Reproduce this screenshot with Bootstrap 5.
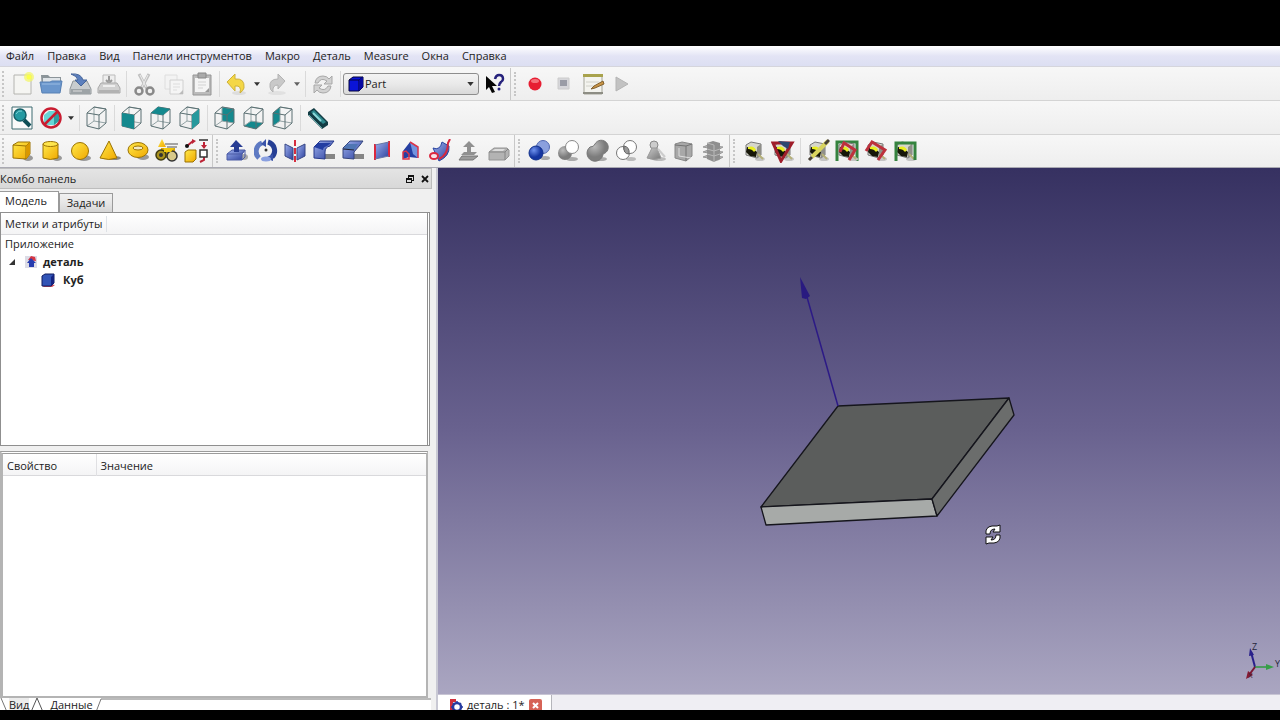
<!DOCTYPE html>
<html lang="ru">
<head>
<meta charset="utf-8">
<meta name="viewport" content="width=device-width, initial-scale=1">
<title>деталь : 1*</title>
<link href="https://cdn.jsdelivr.net/npm/bootstrap@5.3.0/dist/css/bootstrap.min.css" rel="stylesheet">
<script src="https://cdn.jsdelivr.net/npm/bootstrap@5.3.0/dist/js/bootstrap.bundle.min.js"></script>
<style>
  body { font-family: "Open Sans", "Noto Sans", sans-serif; font-size: 11px; line-height: 16px; color: #222; background: #000; padding: 46px 0 10px; }
  .app { background: #f0f0f0; }
  .menus { height: 21px; padding-left: 6px; gap: 13px; background: linear-gradient(#fff, #e3e4f5 50%, #dcdff2); border-bottom: 1px solid #d5d5dc; }
  .menus a { color: #222; text-decoration: none; }
  .bar-row { height: 34px; border-bottom: 1px solid #d4d4d4; background: linear-gradient(#f7f7f7, #eeeeee); }
  .bar-row.last { height: 33px; border-bottom-color: #a9a9b2; }
  .grip { width: 7px; height: 26px; padding-left: 2px; }
  .grip::before { content: ""; display: block; height: 100%; width: 2px; border-left: 2px dotted #c6c6c6; }
  .grip.next { width: 12px; height: 32px; padding: 4px 0 4px 6px; background: linear-gradient(#c8c8c8, #c8c8c8) 2px 0 / 1px 100% no-repeat; }
  .split { width: 6px; height: 26px; background: linear-gradient(#dadada, #dadada) 3px 0 / 1px 100% no-repeat; }
  .tool { width: 29px; height: 30px; padding: 0; border: 0; background: none; display: flex; align-items: center; justify-content: center; }
  .tool svg { width: 24px; height: 24px; }
  .drop { width: 11px; height: 30px; border: 0; background: none; padding: 0; display: flex; align-items: center; justify-content: center; }
  .combo { width: 136px; height: 22px; border: 1px solid #8d8d8d; border-radius: 3px; background: linear-gradient(#f3f3f3, #e9e9e9 50%, #d9d9d9); padding: 0 4px; }
  .combo select { appearance: none; border: 0; background: none; color: #222; padding: 0 0 0 1px; font-size: 11px; line-height: 16px; min-width: 0; }
  .dock { width: 438px; border-right: 2px solid #c9c9d4; }
  .dock-title { height: 21px; margin-right: 4px; gap: 7px; padding-right: 2px; background: linear-gradient(#e4e4e4, #d8d8d8); border: 1px solid #bdbdbd; border-left: 0; }
  .dock-title button, .doc-close { border: 0; padding: 0; background: none; display: flex; }
  .page-tabs { height: 23px; }
  .page-tabs button { width: 54px; height: 19px; border: 1px solid #9a9a9a; border-bottom: 0; padding: 0 0 1px; line-height: 16px; color: #222; background: linear-gradient(#f0f0f0, #e6e6e6 50%, #d6d6d6); }
  .page-tabs button.active { width: 59px; height: 21px; border-left: 0; padding: 0 6px 2px 0; background: #fff; }
  .tree-frame { flex: 235 1 0; margin-right: 6px; border: 1px solid #8f8f8f; border-right: 3px double #8f8f8f; background: #fff; }
  .prop-frame { flex: 246 1 0; margin: 5px 8px 0 0; border: 2px solid #b4b4b4; border-left-width: 3px; border-top: 3px double #9b9b9b; background: #fff; }
  .head { height: 22px; background: linear-gradient(#fff, #f4f4f5); border-bottom: 1px solid #d9d9dc; width: 100%; }
  .head th { font-weight: 400; padding: 4px 4px 1px; height: 22px; }
  .head th + th { border-left: 1px solid #e0e0e3; }
  .tree-item { height: 18px; line-height: 18px; }
  .sheets { height: 12px; background: #fff; overflow: hidden; margin-right: 5px; }
  .sheets button, .doc-tab { border: 0; background: none; padding: 0; line-height: 14px; color: #222; }
  .sheets .off { background: #ececec; }
  .view3d { position: relative; overflow: hidden; background: linear-gradient(#363161, #69628f 50%, #aaa6c1); }
  .gizmo { position: absolute; right: 0; bottom: 12px; width: 40px; height: 42px; }
  .docs { height: 16px; background: #efeef3; border-top: 1px solid #c8c5d4; overflow: hidden; }
  .doc { height: 20px; width: 114px; padding: 0 0 0 10px; background: #fff; border-right: 1px solid #b5b5bb; }
</style>
</head>
<body class="vh-100 overflow-hidden">
<svg class="position-absolute" width="0" height="0" aria-hidden="true">
  <defs>
    <linearGradient id="gy" x2="1" y2="1"><stop stop-color="#ffe94a"/><stop offset="1" stop-color="#f0a800"/></linearGradient>
    <linearGradient id="gb" x2="1" y2="1"><stop stop-color="#9db0ee"/><stop offset="1" stop-color="#2b3f9c"/></linearGradient>
    <linearGradient id="gg" x2="1" y2="1"><stop stop-color="#c9c9c9"/><stop offset="1" stop-color="#777"/></linearGradient>
    <radialGradient id="rb" cx=".35" cy=".3"><stop stop-color="#6f92ee"/><stop offset="1" stop-color="#1535a0"/></radialGradient>
    <radialGradient id="rg" cx=".35" cy=".3"><stop stop-color="#bbb"/><stop offset="1" stop-color="#7c7c7c"/></radialGradient>
    <symbol id="wire" viewBox="0 0 24 24"><path d="M9 1v14L2 20M9 15l12 2M9 1l12 2" fill="none" stroke="#93a3a5"/><path d="M2 7l12 2v14L2 20zM2 7l7-6 12 2-7 6M21 3v14l-7 6" fill="none" stroke="#5a6f72"/></symbol>
    <symbol id="clamp" viewBox="0 0 24 24"><ellipse cx="18" cy="20" rx="5" ry="2" fill="#c4c4c4"/><path d="M4 6l5-3 10 2v11l-4 3-11-3z" fill="#d6d6cc" stroke="#777"/><path d="M15 8l4-3v11l-4 3z" fill="#8f8f88"/><path d="M5 8l5 1 5 4-1 5-6-1-4-4z" fill="#161608"/><path d="M6 8q6-2 8 3l-2 2q-2-3-6-3z" fill="#e9ee22"/><path d="M16 15l5 5" stroke="#b5b078" stroke-width="2"/></symbol>
    <symbol id="down" viewBox="0 0 8 5"><path d="M0 0h8L4 5z" fill="#333"/></symbol>
  </defs>
</svg>
<div class="app h-100 d-flex flex-column">
  <nav class="menus d-flex align-items-center flex-shrink-0" aria-label="Меню">
    <a href="#">Файл</a><a href="#">Правка</a><a href="#">Вид</a><a href="#">Панели инструментов</a><a href="#">Макро</a><a href="#">Деталь</a><a href="#">Measure</a><a href="#">Окна</a><a href="#">Справка</a>
  </nav>

  <div class="bar-row d-flex align-items-center flex-shrink-0" role="toolbar">
    <span class="grip"></span>
    <button class="tool" aria-label="Создать"><svg viewBox="0 0 24 24"><path d="M4 3h17v19H4z" fill="#f5f5f2" stroke="#b4b4b0"/><circle cx="19" cy="5" r="5" fill="#f3f56a" opacity=".75"/><circle cx="19" cy="5" r="2.500" fill="#faff4a"/></svg></button>
    <button class="tool" aria-label="Открыть"><svg viewBox="0 0 24 24"><path d="M2 3h7l2 2h11v14H3z" fill="#8b9499"/><path d="M4 6h17v9H4z" fill="#dfe4e8"/><path d="M1 10h10l2-1h10l-2 12H3z" fill="#6a96cc" stroke="#5780b4"/><path d="M3 12h18" stroke="#9abce3"/></svg></button>
    <button class="tool" aria-label="Сохранить"><svg viewBox="0 0 24 24"><path d="M5 9h14l4 8v5H2v-5z" fill="#c8ccce" stroke="#8f9598"/><path d="M3 17h19v5H3z" fill="#9da3a6"/><path d="M5 19h9" stroke="#ddd"/><path d="M3 2q10-1 12 6h4l-6 6-6-6h3Q9 4 3 2z" fill="#5b7fbd" stroke="#45649a"/></svg></button>
    <button class="tool" aria-label="Печать"><svg viewBox="0 0 24 24"><path d="M6 3h12v10H6z" fill="#eee" stroke="#bbb"/><path d="M12 4v5M9 8l3 3 3-3" stroke="#999" stroke-width="2" fill="none"/><path d="M4 11h16l3 5v5H1v-5z" fill="#d0d0d0" stroke="#a9a9a9"/><path d="M2 18h20v3H2z" fill="#b2b2b2"/><path d="M6 14h12" stroke="#eee" stroke-width="2"/></svg></button>
    <span class="split"></span>
    <button class="tool" aria-label="Вырезать"><svg viewBox="0 0 24 24"><path d="M7 2l8 15M17 2L9 17" stroke="#c0c0c0" stroke-width="3"/><path d="M8 3l6 12M16 3l-6 12" stroke="#eee"/><circle cx="7" cy="19" r="3.500" fill="none" stroke="#898989" stroke-width="2.500"/><circle cx="18" cy="19" r="3.500" fill="none" stroke="#898989" stroke-width="2.500"/></svg></button>
    <button class="tool" aria-label="Копировать"><svg viewBox="0 0 24 24"><path d="M4 3h12v14H4z" fill="#f3f3f3" stroke="#dedede"/><path d="M9 8h13v14H9z" fill="#f5f5f5" stroke="#d0d0d0"/><path d="M12 12h7M12 15h7M12 18h4" stroke="#ddd"/><path d="M18 22l4-4v4z" fill="#bbb"/></svg></button>
    <button class="tool" aria-label="Вставить"><svg viewBox="0 0 24 24"><path d="M3 3h18v20H3z" fill="#bbb" stroke="#959595"/><path d="M5 6h14v14H5z" fill="#f4f4f4"/><path d="M8 1h8v5H8z" fill="#aaa" stroke="#888"/><path d="M8 10h8M8 13h8M8 16h5" stroke="#d2d2d2"/><path d="M15 20l4-4v4z" fill="#999"/></svg></button>
    <span class="split"></span>
    <button class="tool" aria-label="Отменить"><svg viewBox="0 0 24 24"><ellipse cx="14" cy="21" rx="7" ry="2" fill="#ddd"/><path d="M2 10l8-8v5q10-1 9 9-1 3-4 5 2-8-5-7v5z" fill="#f4d746" stroke="#ceb13a"/></svg></button>
    <button class="drop" aria-label="История отмены"><svg width="6" height="4"><use href="#down"/></svg></button>
    <button class="tool" aria-label="Повторить"><svg viewBox="0 0 24 24"><ellipse cx="12" cy="21" rx="9" ry="2" fill="#e1e1e1"/><path d="M20 9l-7-7v5Q4 7 5 15q0 3 3 5-1-7 5-7v4z" fill="#c9c9c9" stroke="#b3b3b3"/></svg></button>
    <button class="drop opacity-75" aria-label="История повтора"><svg width="6" height="4"><use href="#down"/></svg></button>
    <span class="split"></span>
    <button class="tool" aria-label="Обновить"><svg viewBox="0 0 24 24"><path d="M4 11q1-7 8-7 4 0 6 3l3-3v8h-8l3-3q-6-4-9 2zM20 14q-1 7-8 7-4 0-6-3l-3 3v-8h8l-3 3q6 4 9-2z" fill="#d2d2d2" stroke="#a8a8a8"/></svg></button>
    <span class="split"></span>
    <div class="combo d-flex align-items-center">
      <svg width="16" height="16" viewBox="0 0 16 16"><path d="M1 4l4-3h10v10l-4 4H1z" fill="#0a14d8" stroke="#04053a"/><path d="M1 4h10v11M11 4l4-3" fill="none" stroke="#04053a"/><path d="M11 4l4-3v10l-4 4z" fill="#0709a0"/></svg>
      <select class="flex-fill" aria-label="Верстак"><option>Part</option></select>
      <svg width="7" height="4"><use href="#down"/></svg>
    </div>
    <button class="tool" aria-label="Что это?"><svg viewBox="0 0 24 24"><path d="M4 4v14l3-3 3 6 3-1-3-6h5z" fill="#050505"/><path d="M13 7q1-4 4-4 4 0 4 4 0 2-2 3-2 2-2 4" fill="none" stroke="#26227c" stroke-width="2.500"/><circle cx="17" cy="17" r="1.500" fill="#26227c"/></svg></button>
    <span class="grip next"></span>
    <button class="tool" aria-label="Запись макроса"><svg viewBox="0 0 24 24"><circle cx="12" cy="12" r="6.500" fill="#e71d32"/><ellipse cx="12" cy="9" rx="4" ry="2" fill="#f4717c"/></svg></button>
    <button class="tool" aria-label="Остановить запись"><svg viewBox="0 0 24 24"><path d="M6 6h11v11H6z" fill="#d6d6da" stroke="#ccc"/><path d="M8 8h7v6H8z" fill="#9a9ca6"/></svg></button>
    <button class="tool" aria-label="Макросы"><svg viewBox="0 0 24 24"><path d="M3 3h18v19H3z" fill="#f3f3ee" stroke="#a5a59a"/><path d="M2 2h20v3H2z" fill="#a8a24c"/><path d="M5 10h13M5 14h9" stroke="#d0d0c8"/><path d="M2 20h20v2H2z" fill="#8d8d84"/><path d="M22 9l-9 5-3 3 4-1 9-4z" fill="#c99445" stroke="#80602e"/></svg></button>
    <button class="tool" aria-label="Выполнить макрос"><svg viewBox="0 0 24 24"><path d="M6 5l12 7-12 7z" fill="#c2c2c2" stroke="#b4b4b4"/></svg></button>
  </div>

  <div class="bar-row d-flex align-items-center flex-shrink-0" role="toolbar">
    <span class="grip"></span>
    <button class="tool" aria-label="Показать всё"><svg viewBox="0 0 24 24"><path d="M2 1h20v22H2z" fill="#fafafa" stroke="#3c6a70"/><path d="M14 14l6 6" stroke="#0e4e56" stroke-width="4"/><circle cx="10" cy="9" r="6" fill="#259aa2" stroke="#136069" stroke-width="1.500"/><path d="M6 8q2-4 6-3" stroke="#7dd0d4" fill="none"/></svg></button>
    <button class="tool" aria-label="Стиль отображения"><svg viewBox="0 0 24 24"><path d="M5 9l5-4h10v10l-5 4H5z" fill="#67d6d6"/><path d="M15 9l5-4v10l-5 4z" fill="#2f9da0"/><circle cx="12" cy="12" r="9.500" fill="none" stroke="#c91d31" stroke-width="2.500"/><path d="M19 5L5 19" stroke="#c91d31" stroke-width="2.500"/></svg></button>
    <button class="drop" aria-label="Выбрать стиль"><svg width="6" height="4"><use href="#down"/></svg></button>
    <span class="split"></span>
    <button class="tool" aria-label="Аксонометрия"><svg><use href="#wire"/></svg></button>
    <span class="split"></span>
    <button class="tool" aria-label="Спереди"><svg viewBox="0 0 24 24"><use href="#wire"/><path d="M2 7l12 2v14L2 20z" fill="#14898e"/></svg></button>
    <button class="tool" aria-label="Сверху"><svg viewBox="0 0 24 24"><use href="#wire"/><path d="M2 7l7-6 12 2-7 6z" fill="#14898e"/></svg></button>
    <button class="tool" aria-label="Справа"><svg viewBox="0 0 24 24"><use href="#wire"/><path d="M14 9l7-6v14l-7 6z" fill="#27999d"/></svg></button>
    <span class="split"></span>
    <button class="tool" aria-label="Сзади"><svg viewBox="0 0 24 24"><path d="M9 1l12 2v14L9 15z" fill="#14898e"/><use href="#wire"/></svg></button>
    <button class="tool" aria-label="Снизу"><svg viewBox="0 0 24 24"><path d="M2 20l7-5 12 2-7 6z" fill="#14898e"/><use href="#wire"/></svg></button>
    <button class="tool" aria-label="Слева"><svg viewBox="0 0 24 24"><path d="M2 7l7-6v14l-7 5z" fill="#14898e"/><use href="#wire"/></svg></button>
    <span class="split"></span>
    <button class="tool" aria-label="Измерить расстояние"><svg viewBox="0 0 24 24"><path d="M2 6l6-4 14 14v3l-6 4L2 9z" fill="#123c44"/><path d="M5 6l3-2 12 12-3 2z" fill="#2d878c"/><path d="M7 7l8 8" stroke="#8ddada" stroke-width="2"/><path d="M3 9l13 13" stroke="#5fa6a8"/></svg></button>
  </div>

  <div class="bar-row last d-flex align-items-center flex-shrink-0" role="toolbar">
    <span class="grip"></span>
    <button class="tool" aria-label="Куб"><svg viewBox="0 0 24 24"><ellipse cx="18" cy="19" rx="5" ry="3" fill="#999"/><path d="M3 6l5-3h12v12l-4 5-13-1z" fill="url(#gy)" stroke="#9b7304"/><path d="M3 6l13 1v13M16 7l4-4" fill="none" stroke="#9b7304"/><path d="M16 7l4-4v12l-4 5z" fill="#d99800"/></svg></button>
    <button class="tool" aria-label="Цилиндр"><svg viewBox="0 0 24 24"><ellipse cx="18" cy="19" rx="5" ry="3" fill="#999"/><path d="M4 5v14q7 3 15 0V5z" fill="url(#gy)" stroke="#9b7304"/><ellipse cx="11.500" cy="5" rx="7.500" ry="2.500" fill="#ffe54c" stroke="#9b7304"/></svg></button>
    <button class="tool" aria-label="Сфера"><svg viewBox="0 0 24 24"><ellipse cx="16" cy="19" rx="7" ry="3" fill="#999"/><circle cx="12" cy="12" r="8.500" fill="url(#gy)" stroke="#9b7304"/></svg></button>
    <button class="tool" aria-label="Конус"><svg viewBox="0 0 24 24"><ellipse cx="17" cy="19" rx="7" ry="2" fill="#888"/><path d="M12 2l8 17q-8 3-17 0z" fill="url(#gy)" stroke="#9b7304"/></svg></button>
    <button class="tool" aria-label="Тор"><svg viewBox="0 0 24 24"><ellipse cx="17" cy="18" rx="6" ry="3" fill="#999"/><ellipse cx="12" cy="11" rx="10" ry="7.500" fill="url(#gy)" stroke="#9b7304"/><ellipse cx="12" cy="9" rx="5" ry="2" fill="#f3e9c0" stroke="#9b7304"/></svg></button>
    <button class="tool" aria-label="Примитивы"><svg viewBox="0 0 24 24"><path d="M7 0l4 8H3z" fill="url(#gy)"/><path d="M6 9h14v10H6z" fill="#d7a60a"/><circle cx="6" cy="16" r="5" fill="#a9911c" stroke="#3f3b12" stroke-width="1.500"/><circle cx="6" cy="16" r="2" fill="#333"/><circle cx="17" cy="17" r="5" fill="#d8c98a" stroke="#333" stroke-width="1.500"/><path d="M10 5h13M12 8h10" stroke="#555"/><path d="M9 9h10l-3 4H9z" fill="#f1c90e"/></svg></button>
    <button class="tool" aria-label="Построение фигур"><svg viewBox="0 0 24 24"><path d="M1 13l3-2h8v9l-3 3H1z" fill="url(#gy)" stroke="#9b7304"/><path d="M3 7l6-5M20 3v6M20 18v3l-4 2" stroke="#bd2437" stroke-width="2" fill="none"/><path d="M8 0l4 2-4 3zM17 6h6l-3 4z" fill="#bd2437"/><circle cx="3" cy="7" r="2" fill="#111"/><path d="M15 1h9M16 11h7v7h-7z" fill="#fff" stroke="#333" stroke-width="1.500"/></svg></button>
    <span class="grip next"></span>
    <button class="tool" aria-label="Выдавить"><svg viewBox="0 0 24 24"><ellipse cx="19" cy="18" rx="4" ry="3" fill="#aaa"/><path d="M2 15l5-4h13l-3 4v6H2z" fill="url(#gb)" stroke="#4c5ca6"/><path d="M2 15h15l3-4v7l-3 3" fill="none" stroke="#4c5ca6"/><path d="M11 1l7 7h-4v5H9V8H5z" fill="#283d93"/></svg></button>
    <button class="tool" aria-label="Вращать"><svg viewBox="0 0 24 24"><path d="M8 4a9 9 0 0 0-3 15" fill="none" stroke="#5e7ac3" stroke-width="5"/><path d="M14 3a9 9 0 0 1 4 15" fill="none" stroke="#263f94" stroke-width="5"/><path d="M12 0v8l-5-3zM11 19l8-4v7z" fill="#3953a9"/><circle cx="12" cy="11" r="1.500" fill="#333"/><ellipse cx="12" cy="20" rx="5" ry="2.500" fill="#8aa0e0"/></svg></button>
    <button class="tool" aria-label="Зеркало"><svg viewBox="0 0 24 24"><path d="M2 5l8 4v12l-8-4z" fill="url(#gb)" stroke="#374784"/><path d="M22 5l-8 4v12l8-4z" fill="url(#gb)" stroke="#374784"/><path d="M12 1v22" stroke="#d62d3e" stroke-width="2" stroke-dasharray="6 2"/></svg></button>
    <button class="tool" aria-label="Скругление"><svg viewBox="0 0 24 24"><path d="M10 15h13v5H13z" fill="#858585"/><path d="M2 8l6-6h14l-4 5q-5 1-5 6v7l-11-1z" fill="url(#gb)" stroke="#26388a"/><path d="M2 8l4-4h13l-4 3q-4 1-4 4z" fill="#223da2"/></svg></button>
    <button class="tool" aria-label="Фаска"><svg viewBox="0 0 24 24"><path d="M10 15h13v5H13z" fill="#858585"/><path d="M2 9l7-7h13l-3 4-6 7v7l-11-1z" fill="url(#gb)" stroke="#34447c"/><path d="M6 5h11l-4 6-11-1z" fill="#4f76b4"/><path d="M2 10l11 1" stroke="#223"/></svg></button>
    <button class="tool" aria-label="Грань"><svg viewBox="0 0 24 24"><path d="M5 6l14-3v14L5 20z" fill="url(#gb)"/><path d="M5 5v16M19 2v16" stroke="#db273d" stroke-width="2"/><path d="M5 6l14-3M5 20l14-3" stroke="#6677a5"/></svg></button>
    <button class="tool" aria-label="Линейчатая поверхность"><svg viewBox="0 0 24 24"><path d="M4 12l7-9 8 5v11l-9-1-6 2z" fill="#263fa2"/><path d="M11 3l8 5v11l-5-4z" fill="#7294df"/><path d="M4 20v-7l3-1 3 3v5zM11 3l8 5v11" fill="none" stroke="#dc3348" stroke-width="1.500"/></svg></button>
    <button class="tool" aria-label="Профиль по пути"><svg viewBox="0 0 24 24"><path d="M5 9q7 3 9-6l7 4q1 10-10 15z" fill="url(#gb)" stroke="#2945a0"/><path d="M11 20q9-4 9-16l2-4" fill="none" stroke="#d52940" stroke-width="2"/><ellipse cx="6" cy="17" rx="4" ry="3" fill="#f7e4e8" stroke="#dc2840" stroke-width="2"/></svg></button>
    <button class="tool" aria-label="Смещение"><svg viewBox="0 0 24 24"><path d="M12 2l6 6h-4v5h6l-3 3H4l3-3h3V8H6z" fill="#909090"/><path d="M5 17h16l-5 4H2z" fill="#9b9b9b" stroke="#777"/></svg></button>
    <button class="tool" aria-label="Толщина"><svg viewBox="0 0 24 24"><path d="M3 13l5-4h13l2 2v6l-4 4H3z" fill="#b3b3b3" stroke="#949494"/><path d="M3 13h16v8M19 13l3-3" fill="none" stroke="#858585"/><path d="M6 12l3-2h10l-2 2z" fill="#ddd"/></svg></button>
    <span class="grip next"></span>
    <button class="tool" aria-label="Логическая операция"><svg viewBox="0 0 24 24"><ellipse cx="18" cy="19" rx="5" ry="2" fill="#aaa"/><circle cx="16" cy="8" r="6.500" fill="#8ba0de" stroke="#5269b1"/><circle cx="9" cy="14" r="7" fill="url(#rb)" stroke="#10308b"/></svg></button>
    <button class="tool" aria-label="Вычесть"><svg viewBox="0 0 24 24"><ellipse cx="16" cy="20" rx="6" ry="2" fill="#aaa"/><circle cx="9" cy="14" r="7" fill="url(#rg)"/><circle cx="16" cy="8" r="6.500" fill="#fff" stroke="#888"/></svg></button>
    <button class="tool" aria-label="Объединить"><svg viewBox="0 0 24 24"><ellipse cx="16" cy="20" rx="6" ry="2" fill="#aaa"/><path d="M10 5a7 7 0 1 1 8 10 8 8 0 1 1-13-7q4 0 5-3z" fill="url(#rg)" stroke="#777"/></svg></button>
    <button class="tool" aria-label="Пересечь"><svg viewBox="0 0 24 24"><ellipse cx="17" cy="20" rx="5" ry="2" fill="#bbb"/><circle cx="9" cy="14" r="6.500" fill="#fff" stroke="#777"/><circle cx="16" cy="8" r="6.500" fill="#fff" stroke="#777"/><path d="M10 7q6 1 5 8-6 0-5-8z" fill="#999" stroke="#666"/></svg></button>
    <button class="tool" aria-label="Соединить"><svg viewBox="0 0 24 24"><ellipse cx="16" cy="20" rx="7" ry="2" fill="#bbb"/><circle cx="11" cy="6" r="4" fill="#ccc" stroke="#888"/><path d="M9 9h5l4 10q-7 3-14 0z" fill="url(#gg)" stroke="#999"/><path d="M15 10l7 8" stroke="#ccc" stroke-width="2"/></svg></button>
    <button class="tool" aria-label="Сечение"><svg viewBox="0 0 24 24"><path d="M3 5l7-2 10 2v12l-6 5-11-3z" fill="#a8a8a8" stroke="#888"/><path d="M3 6l11 1v15M14 7l6-2" fill="none" stroke="#737373"/><path d="M7 9v8l12 2" stroke="#ddd" fill="none"/></svg></button>
    <button class="tool" aria-label="Поперечные сечения"><svg viewBox="0 0 24 24"><path d="M2 8l5-2 15 2-5 3zM2 13l5-2 15 2-5 3zM2 18l5-2 15 2-5 3z" fill="#b4b4b4" stroke="#999"/><path d="M6 4l6-2 7 2v16l-6 3-7-3z" fill="#8f8f8f"/><path d="M6 4l7 2v17M6 10l7 2 6-2M6 15l7 2 6-2" fill="none" stroke="#b9b9b9"/></svg></button>
    <span class="grip next"></span>
    <button class="tool" aria-label="Measure Linear"><svg><use href="#clamp"/></svg></button>
    <button class="tool" aria-label="Measure Angular"><svg viewBox="0 0 24 24"><use href="#clamp"/><path d="M2 4h19L10 22z" fill="none" stroke="#9f1d2a" stroke-width="3"/><path d="M7 2l12 1-2 7-5-3z" fill="#2d4770"/></svg></button>
    <span class="split"></span>
    <button class="tool" aria-label="Measure Refresh"><svg viewBox="0 0 24 24"><use href="#clamp"/><path d="M22 2L6 18" stroke="#d9d45e" stroke-width="4"/><path d="M23 1l-4 4M6 18l-3 3" stroke="#463f35" stroke-width="3"/></svg></button>
    <button class="tool" aria-label="Measure Toggle All"><svg viewBox="0 0 24 24"><path d="M2 22V3h20v19" fill="none" stroke="#35833f" stroke-width="3"/><use href="#clamp"/><path d="M5 13l4-9 11 7-6 10" fill="none" stroke="#bd313d" stroke-width="3"/></svg></button>
    <button class="tool" aria-label="Measure Toggle 3D"><svg viewBox="0 0 24 24"><use href="#clamp"/><path d="M2 12l6-9 13 8-7 10" fill="none" stroke="#bd313d" stroke-width="3"/></svg></button>
    <button class="tool" aria-label="Measure Toggle Delta"><svg viewBox="0 0 24 24"><use href="#clamp"/><path d="M3 22V4h19v17" fill="none" stroke="#35833f" stroke-width="3"/></svg></button>
  </div>

  <main class="flex-fill d-flex" style="min-height:0">
    <aside class="dock d-flex flex-column flex-shrink-0">
      <div class="dock-title d-flex align-items-center flex-shrink-0">
        <span class="flex-fill">Комбо панель</span>
        <button aria-label="Открепить"><svg width="8" height="8" viewBox="0 0 8 8"><path d="M2 0h6v6H6v2H0V3h2zM3 2v1h3v2h1V2zM1 5v2h4V5z" fill="#111" fill-rule="evenodd"/></svg></button>
        <button aria-label="Закрыть панель"><svg width="8" height="8" viewBox="0 0 8 8"><path d="M1 1l6 6M7 1L1 7" stroke="#111" stroke-width="1.800"/></svg></button>
      </div>
      <div class="page-tabs d-flex align-items-end flex-shrink-0" role="tablist">
        <button class="active" role="tab">Модель</button><button role="tab">Задачи</button>
      </div>
      <div class="tree-frame overflow-hidden">
        <div class="head d-flex align-items-center"><span class="ps-1 pe-1 border-end">Метки и атрибуты</span></div>
        <div class="tree-item ps-1">Приложение</div>
        <div class="tree-item d-flex align-items-center fw-bold ps-2">
          <svg class="me-2" width="6" height="6" viewBox="0 0 6 6"><path d="M6 0v6H0z" fill="#333"/></svg>
          <svg class="me-1" width="16" height="14" viewBox="0 0 16 14"><path d="M2 1h12v12H2z" fill="#dcdce6"/><path d="M5 5l3-4 4 1 1 4z" fill="#d73643"/><path d="M8 3l5 5h-2v4H6V8H4z" fill="#273caf"/></svg>
          <span>деталь</span>
        </div>
        <div class="tree-item d-flex align-items-center fw-bold ps-4">
          <svg class="ms-3 me-2" width="14" height="14" viewBox="0 0 14 14"><path d="M4 10l10 2-3 2H2z" fill="#cc4852"/><path d="M1 3l3-2h9v9l-3 3H1z" fill="#3154b7" stroke="#101c63"/><path d="M10 4l3-3v9l-3 3z" fill="#142482"/></svg>
          <span>Куб</span>
        </div>
      </div>
      <div class="prop-frame overflow-hidden">
        <table class="head">
          <thead><tr><th style="width:22%">Свойство</th><th>Значение</th></tr></thead>
        </table>
      </div>
      <div class="sheets d-flex align-items-start flex-shrink-0" role="tablist">
        <svg width="9" height="14"><path d="M1 0l6 14" stroke="#777"/></svg>
        <button class="off" role="tab">Вид</button>
        <svg width="21" height="14"><path d="M2 14L8 0l6 14" fill="none" stroke="#555"/></svg>
        <button role="tab">Данные</button>
        <svg class="flex-fill" height="14"><path d="M3 14L8 1h400" fill="none" stroke="#777"/></svg>
      </div>
    </aside>

    <section class="flex-fill d-flex flex-column" style="min-width:0">
      <div class="view3d flex-fill">
        <svg class="d-block w-100 h-100" viewBox="0 0 842 526" role="img" aria-label="Куб">
          <g stroke="#15151c" stroke-width="1.300" stroke-linejoin="round">
            <path d="M400 238l171-8-77 101-171 8z" fill="#5b5d5c"/>
            <path d="M323 339l171-8 5 17-171 9z" fill="#a7aaa8"/>
            <path d="M571 230l5 17-77 101-5-17z" fill="#6b6d6c"/>
          </g>
          <path d="M400 238L367 122" stroke="#2c1a86" stroke-width="1.500"/>
          <path d="M362 109l10 19-4 3-4-1z" fill="#291a80"/>
          <g fill="#fff" stroke="#111" stroke-width="1"><path d="M548 366q-1-7 6-8h5l3-1v7h-7l2-3q-5 0-5 5zM562 367q1 7-6 8h-5l-3 1v-7h7l-2 3q5 0 5-5z"/></g>
        </svg>
        <svg class="gizmo" viewBox="0 0 40 42" font-family="Open Sans, sans-serif" font-size="9">
          <path d="M15 27L11 12" stroke="#29208b" stroke-width="2"/><path d="M10 8l4 7-5 1z" fill="#29208b"/>
          <path d="M15 27h14" stroke="#2f9840" stroke-width="1.500"/><path d="M26 24l8 3-8 3z" fill="#36a047"/>
          <path d="M15 27l-6 8" stroke="#7c1834" stroke-width="2"/><path d="M6 39l2-8 5 4z" fill="#861932"/>
          <text x="12" y="10" fill="#25253a">Z</text><text x="35" y="27" fill="#25253a">Y</text><text x="8" y="38" font-size="8" fill="#3c2035">X</text>
        </svg>
      </div>
      <div class="docs flex-shrink-0">
        <div class="doc d-flex align-items-center">
          <svg width="15" height="15" viewBox="0 0 15 15" class="flex-shrink-0"><path d="M2 1h6v3H5v9H2z" fill="#d0303c"/><circle cx="9" cy="9" r="4" fill="none" stroke="#263ba0" stroke-width="2.500"/><path d="M9 3v2M9 13v2M3 9h2M13 9h2M5 5l1 1M13 5l-1 1M5 13l1-1M13 13l-1-1" stroke="#263ba0" stroke-width="1.500"/></svg>
          <button class="doc-tab ms-1 text-nowrap">деталь : 1*</button>
          <button class="doc-close ms-1" aria-label="Закрыть документ"><svg width="13" height="13" viewBox="0 0 13 13"><rect width="13" height="13" rx="2" fill="#d66356"/><path d="M4 4l5 5M9 4L4 9" stroke="#fff" stroke-width="2"/></svg></button>
        </div>
      </div>
    </section>
  </main>
</div>
</body>
</html>
